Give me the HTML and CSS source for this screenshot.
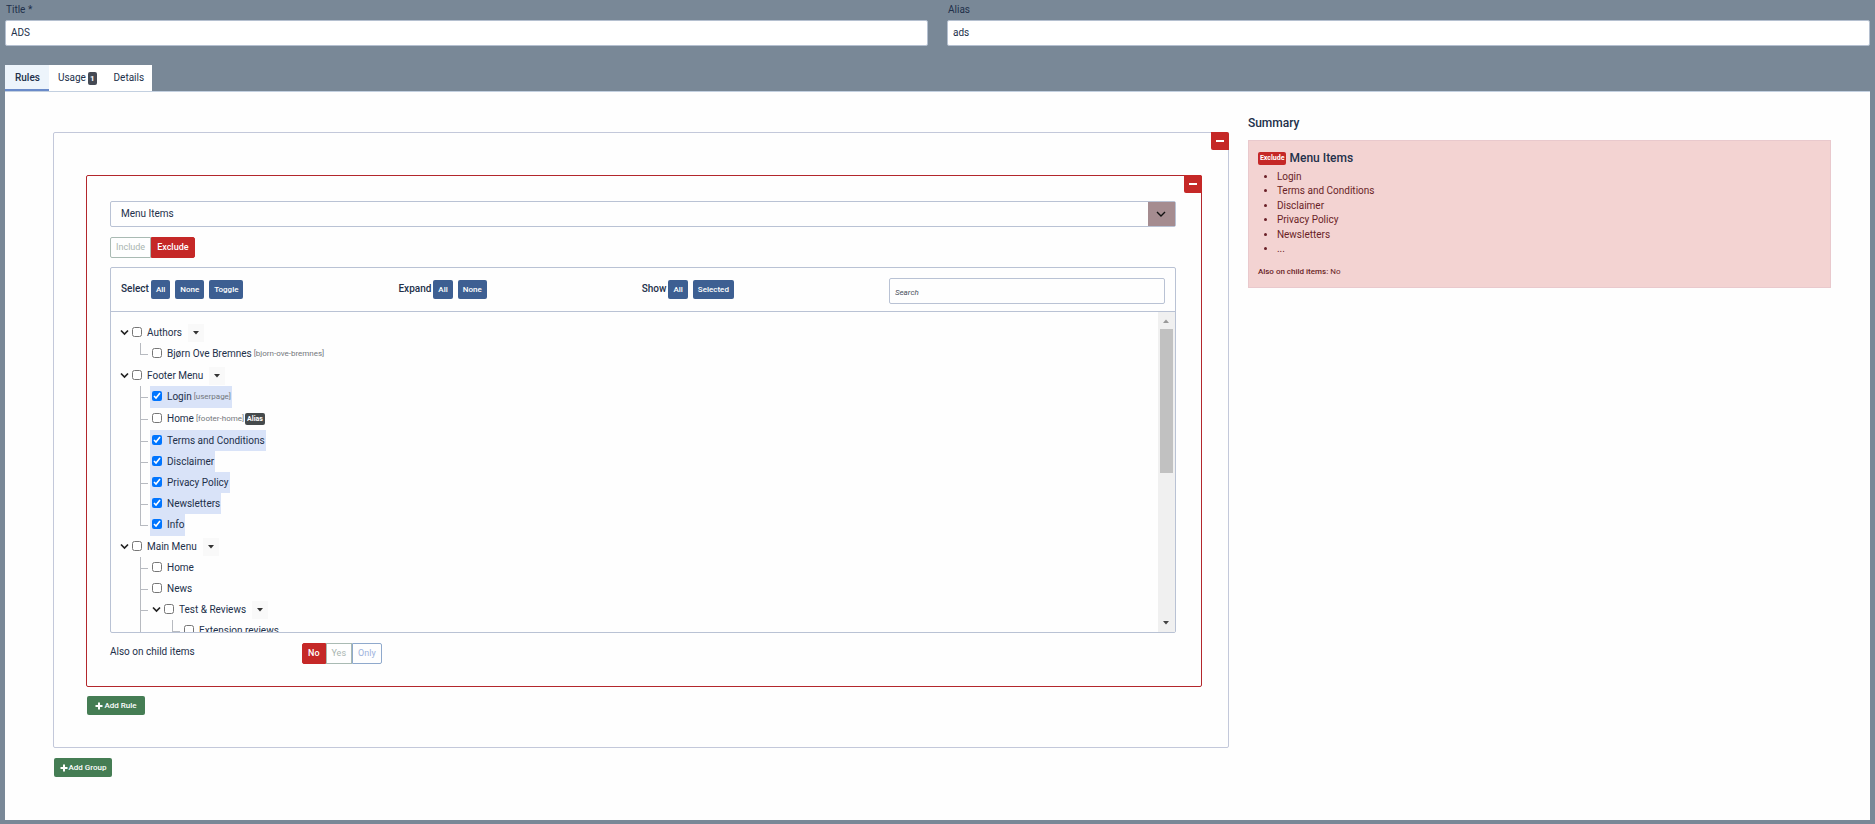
FILE: index.html
```html
<!DOCTYPE html>
<html lang="en">
<head>
<meta charset="utf-8">
<title>ADS</title>
<link rel="stylesheet" href="styles.css">
</head>
<body>
<svg class="sprite" aria-hidden="true">
  <symbol id="chevron" viewBox="0 0 9 9"><path d="M1 2.5 4.5 6 8 2.5" fill="none" stroke="currentColor" stroke-width="1.7"/></symbol>
  <symbol id="plus" viewBox="0 0 8 8"><path d="M4 .5v7M.5 4h7" stroke="currentColor" stroke-width="2"/></symbol>
  <symbol id="minus" viewBox="0 0 8 8"><path d="M0 4h8" stroke="currentColor" stroke-width="2"/></symbol>
  <symbol id="caret" viewBox="0 0 6 4"><path d="M0 0h6L3 3.5z" fill="currentColor"/></symbol>
</svg>
<form class="page">
  <div class="fields">
    <div class="field"><label for="title">Title *</label><input id="title" type="text" value="ADS"></div>
    <div class="field"><label for="alias">Alias</label><input id="alias" type="text" value="ads"></div>
  </div>
  <nav class="tabs">
    <button type="button" class="tab active">Rules</button>
    <button type="button" class="tab">Usage <span class="count">1</span></button>
    <button type="button" class="tab">Details</button>
  </nav>
  <main class="panel">
    <div class="builder">
      <section class="group">
        <button type="button" class="remove" aria-label="Remove group"><svg><use href="#minus"/></svg></button>
        <section class="rule">
          <button type="button" class="remove" aria-label="Remove rule"><svg><use href="#minus"/></svg></button>
          <div class="type">
            <select aria-label="Rule type"><option>Menu Items</option></select>
            <span class="type-arrow"><svg viewBox="0 0 10 6"><path d="M1 1l4 4 4-4" fill="none" stroke="#111" stroke-width="1.4"/></svg></span>
          </div>
          <div class="switch">
            <button type="button">Include</button><button type="button" class="on">Exclude</button>
          </div>
          <div class="picker">
            <div class="toolbar">
              <div class="tools"><b>Select</b><span class="actions"><button type="button">All</button><button type="button">None</button><button type="button">Toggle</button></span></div>
              <div class="tools"><b>Expand</b><span class="actions"><button type="button">All</button><button type="button">None</button></span></div>
              <div class="tools"><b>Show</b><span class="actions"><button type="button">All</button><button type="button">Selected</button></span></div>
              <input class="search" type="text" placeholder="Search" aria-label="Search">
            </div>
            <div class="viewport">
              <ul class="tree">
                <li>
                  <div class="row"><svg class="chev"><use href="#chevron"/></svg><label><input type="checkbox">Authors</label><button type="button" class="more" aria-label="Authors options"><svg><use href="#caret"/></svg></button></div>
                  <ul>
                    <li><div class="row tall"><label><input type="checkbox">Bjørn Ove Bremnes <small>[bjorn-ove-bremnes]</small></label></div></li>
                  </ul>
                </li>
                <li>
                  <div class="row"><svg class="chev"><use href="#chevron"/></svg><label><input type="checkbox">Footer Menu</label><button type="button" class="more" aria-label="Footer Menu options"><svg><use href="#caret"/></svg></button></div>
                  <ul>
                    <li><div class="row tall picked"><label><input type="checkbox" checked>Login <small>[userpage]</small></label></div></li>
                    <li><div class="row tall"><label><input type="checkbox">Home <small>[footer-home]</small></label><span class="tag">Alias</span></div></li>
                    <li><div class="row picked"><label><input type="checkbox" checked>Terms and Conditions</label></div></li>
                    <li><div class="row picked"><label><input type="checkbox" checked>Disclaimer</label></div></li>
                    <li><div class="row picked"><label><input type="checkbox" checked>Privacy Policy</label></div></li>
                    <li><div class="row picked"><label><input type="checkbox" checked>Newsletters</label></div></li>
                    <li><div class="row tall picked"><label><input type="checkbox" checked>Info</label></div></li>
                  </ul>
                </li>
                <li>
                  <div class="row"><svg class="chev"><use href="#chevron"/></svg><label><input type="checkbox">Main Menu</label><button type="button" class="more" aria-label="Main Menu options"><svg><use href="#caret"/></svg></button></div>
                  <ul>
                    <li><div class="row"><label><input type="checkbox">Home</label></div></li>
                    <li><div class="row"><label><input type="checkbox">News</label></div></li>
                    <li class="open">
                      <div class="row"><svg class="chev"><use href="#chevron"/></svg><label><input type="checkbox">Test &amp; Reviews</label><button type="button" class="more" aria-label="Test &amp; Reviews options"><svg><use href="#caret"/></svg></button></div>
                      <ul>
                        <li><div class="row"><label><input type="checkbox">Extension reviews</label></div></li>
                      </ul>
                    </li>
                  </ul>
                </li>
              </ul>
              <div class="scrollbar" aria-hidden="true">
                <svg class="up"><use href="#caret"/></svg>
                <span class="thumb"></span>
                <svg class="down"><use href="#caret"/></svg>
              </div>
            </div>
          </div>
          <div class="children-option">
            <span>Also on child items</span>
            <div class="switch">
              <button type="button" class="on">No</button><button type="button">Yes</button><button type="button" class="blue">Only</button>
            </div>
          </div>
        </section>
        <button type="button" class="add"><svg><use href="#plus"/></svg>Add Rule</button>
      </section>
      <button type="button" class="add"><svg><use href="#plus"/></svg>Add Group</button>
    </div>
    <aside class="summary">
      <h2>Summary</h2>
      <div class="card">
        <h3><span class="badge">Exclude</span>Menu Items</h3>
        <ul>
          <li>Login</li>
          <li>Terms and Conditions</li>
          <li>Disclaimer</li>
          <li>Privacy Policy</li>
          <li>Newsletters</li>
          <li>...</li>
        </ul>
        <p><b>Also on child items:</b> No</p>
      </div>
    </aside>
  </main>
</form>
</body>
</html>
```
FILE: styles.css
```css
* { box-sizing: border-box; }

body {
  margin: 0;
  background: #798897;
  color: #22304a;
  font: 10px/14px Roboto, "Liberation Sans", sans-serif;
}

button, input, select { margin: 0; font: inherit; color: inherit; }
button { padding: 0; border: 0; background: none; white-space: nowrap; }
ul, h2, h3, p { margin: 0; padding: 0; }
b { font-weight: 500; }
.sprite { display: none; }

.page { display: flex; flex-direction: column; min-height: 100vh; padding: 0 5px 4px; }

/* Title and alias */
.fields { display: grid; grid-template-columns: 1fr 1fr; gap: 19px; }
.field label { display: block; height: 20px; padding-left: 1px; line-height: 20px; }
.field input {
  display: block;
  width: 100%;
  height: 26px;
  padding: 0 5px 1px;
  border: 1px solid #b5c0d0;
  border-radius: 2px;
  background: #fff;
}

/* Tabs */
.tabs { display: flex; align-self: flex-start; margin-top: 19px; background: #fff; }
.tab { display: flex; align-items: center; gap: 2px; height: 26px; padding: 2px 8px 0 9px; border-bottom: 2px solid transparent; }
.tab.active { border-bottom-color: #6a8bc9; background: #edf4fb; padding: 2px 9px 0 10px; font-weight: 500; }
.count { padding: 0 2px; border-radius: 2px; background: #454a54; color: #fff; font-size: 8px; font-weight: 700; line-height: 13px; }

.panel {
  display: grid;
  flex: 1;
  grid-template-columns: 121fr 60fr;
  gap: 19px;
  padding: 40px 39px 43px 48px;
  border-top: 1px solid #c3d0e0;
  background: #fefefe;
}

/* Rule builder */
.group {
  position: relative;
  margin-bottom: 10px;
  padding: 42px 26px 32px 32px;
  border: 1px solid #c3c8da;
  border-radius: 2px;
}
.rule {
  position: relative;
  margin-bottom: 9px;
  padding: 25px 25px 22px 23px;
  border: 1px solid #b3272c;
  border-radius: 2px;
}
.remove {
  position: absolute;
  top: -1px;
  right: -1px;
  display: grid;
  place-items: center;
  width: 18px;
  height: 18px;
  border-radius: 0 2px 0 2px;
  background: #c52827;
  color: #fff;
}
.remove svg { width: 8px; height: 8px; }

.type { position: relative; margin-bottom: 10px; }
.type select {
  display: block;
  width: 100%;
  height: 26px;
  padding: 0 10px;
  border: 1px solid #b9c2d4;
  border-radius: 2px;
  appearance: none;
  background: #fefefe;
}
.type-arrow {
  position: absolute;
  inset: 1px 1px 1px auto;
  display: grid;
  place-items: center;
  width: 27px;
  background: #a58c90;
  pointer-events: none;
}
.type-arrow svg { width: 10px; height: 6px; }

.switch { display: flex; }
.switch button { height: 21px; padding: 0 5px 1px; border: 1px solid #a9bab3; color: #a9b5b0; font-size: 9px; }
.switch button:first-child { border-radius: 2px 0 0 2px; }
.switch button:last-child { border-radius: 0 2px 2px 0; }
.switch button.on { border-color: #c52827; background: #c52827; color: #fff; font-weight: 500; }
.switch button.blue { border-color: #8fa9cc; color: #9db2dd; }

.picker { margin: 9px 0 10px; border: 1px solid #b9c2d4; border-radius: 2px; }
.toolbar { display: flex; justify-content: space-between; padding: 10px 10px 7px; border-bottom: 1px solid #b9c2d4; }
.tools { display: flex; gap: 2px; padding-top: 2px; line-height: 17px; }
.actions { display: flex; gap: 5px; }
.actions button { height: 19px; padding: 0 5px; border-radius: 2px; background: #3d5f92; color: #fff; font-size: 8px; font-weight: 500; }
.search { width: 276px; height: 26px; padding: 0 5px; border: 1px solid #b9c2d4; border-radius: 2px; background: #fefefe; }
.search::placeholder { color: #4a5260; font-size: 8px; font-style: italic; }

/* Menu tree */
.viewport { display: flex; justify-content: space-between; height: 320px; overflow: hidden; }
.tree { padding: 10px 9px; }
.tree ul { margin-left: 20px; }
.tree .open > ul { margin-left: 22px; }
.tree li { list-style: none; }
.tree li li {
  padding-left: 10px;
  background:
    linear-gradient(#b7bac0, #b7bac0) 0 0 / 1px 100% no-repeat,
    linear-gradient(#b7bac0, #b7bac0) 0 11px / 8px 1px no-repeat;
}
.tree li li:last-child:not(.open) { background-size: 1px 11px, 8px 1px; }
.row { display: flex; align-items: center; width: fit-content; height: 21px; white-space: nowrap; }
.row.tall { height: 22px; }
.tree li li .row { padding: 0 1px 0 2px; }
.row.picked { background: #d9e3f8; }
.row label { display: flex; align-items: center; }
.row small { margin-left: 2px; color: #73777c; font-size: 8px; }
.row input { width: 10px; height: 10px; margin: 0 5px 2px 0; }
.chev { width: 9px; height: 9px; margin-right: 3px; color: #222; }
.more { display: grid; place-items: center; width: 16px; height: 18px; margin-left: 6px; background: #f9f9f9; color: #333; }
.more svg { width: 6px; height: 4px; }
.tag { margin-left: 1px; padding: 0 2px; border-radius: 2px; background: #454a4c; color: #fff; font-size: 7px; font-weight: 700; line-height: 12px; }

.scrollbar { display: flex; flex-direction: column; align-items: center; width: 17px; padding: 7px 0; background: #f0f0f0; color: #444; }
.scrollbar svg { width: 8px; height: 4px; }
.scrollbar .up { color: #999; transform: rotate(180deg); }
.scrollbar .down { margin-top: auto; }
.thumb { width: 13px; height: 144px; margin-top: 6px; background: #c1c1c1; }

.children-option { display: grid; grid-template-columns: 192px auto; }
.children-option span { padding-top: 2px; }

.add {
  display: flex;
  align-items: center;
  justify-content: center;
  gap: 1px;
  min-width: 58px;
  height: 19px;
  margin-left: 1px;
  padding: 0 5px;
  border-radius: 2px;
  background: #457d54;
  color: #fff;
  font-size: 8px;
  font-weight: 500;
}
.add svg { width: 8px; height: 8px; }

/* Summary */
.summary { margin-top: -17px; }
.summary h2 { margin-bottom: 9px; font-size: 12px; font-weight: 500; line-height: 16px; }
.card { padding: 9px 9px 8px; border: 1px solid #e9c9cd; background: #f3d3d2; color: #6a1f27; }
.card h3 { display: flex; align-items: center; gap: 3px; color: #22304a; font-size: 12px; font-weight: 500; line-height: 16px; }
.badge { padding: 0 2px; border-radius: 2px; background: #c52827; color: #fff; font-size: 7px; font-weight: 700; line-height: 13px; }
.card ul { margin: 4px 0 9px; padding-left: 19px; line-height: 14px; }
.card li:nth-child(even) { margin-bottom: 1px; }
.card p { font-size: 8px; }
```
